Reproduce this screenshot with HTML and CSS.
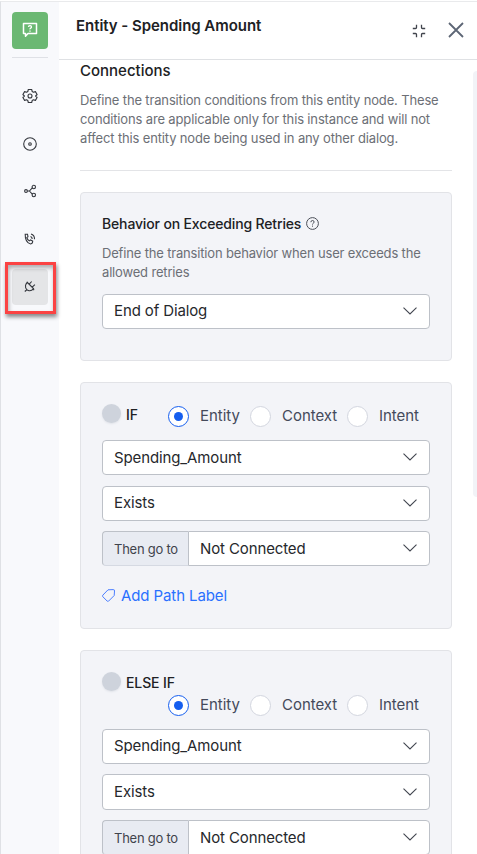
FILE: index.html
```html
<!DOCTYPE html>
<html lang="en">
<head>
<meta charset="utf-8">
<title>Entity - Spending Amount</title>
<link rel="stylesheet" href="styles.css">
</head>
<body>
<svg width="0" height="0" class="defs">
  <symbol id="chevron" viewBox="0 0 14 8"><path d="M.5 .7 7 7 13.500 .7" fill="none" stroke="currentColor" stroke-width="1.100"/></symbol>
</svg>
<div class="app">
  <nav class="rail">
    <div class="logo">
      <svg width="16" height="16" viewBox="0 0 16 16" fill="none" stroke="#fff" stroke-width="1.500"><path d="M1.500 1.500h13v10H6l-2.500 2.700v-2.700h-2z" stroke-linejoin="round"/><path d="M6.500 5q0-1.300 1.500-1.300T9.500 5q0 .7-.8 1.100T8 7.300M8 8.500v1.300" stroke-width="1.300"/></svg>
    </div>
    <div class="rule"></div>
    <a class="item"><svg width="16" height="16" viewBox="0 0 16 16"><path d="M6.300 1.500h3.400l.5 2 1.200.7 2-.6 1.700 2.900-1.500 1.500 1.500 1.500-1.700 2.900-2-.6-1.200.7-.5 2H6.300l-.5-2-1.200-.7-2 .6L.9 9.500 2.400 8 .9 6.500l1.700-2.900 2 .6 1.200-.7z" stroke-linejoin="round"/><circle cx="8" cy="8" r="2"/></svg></a>
    <a class="item"><svg width="16" height="16" viewBox="0 0 16 16"><circle cx="8" cy="8" r="6.300"/><circle cx="8" cy="8" r="1.300"/></svg></a>
    <a class="item"><svg width="16" height="16" viewBox="0 0 16 16"><circle cx="4" cy="8" r="1.400"/><circle cx="11.800" cy="4" r="1.700"/><circle cx="11.800" cy="12" r="1.700"/><path d="M5.400 8h2L10.300 4.800M7.400 8l2.900 3.200"/></svg></a>
    <a class="item"><svg width="16" height="16" viewBox="0 0 16 16"><path d="M3.200 3.200h2.300l.5 2.500-1.200 1q.8 2 2.500 3.200l1.200-1 2.200 1.200q0 2.600-2 2.900Q3 11.500 3.200 3.200zM8.500 5.500q1.700.5 1.700 2.500M9 3q3.700 1 3.500 5.300"/></svg></a>
    <a class="item active"><svg width="16" height="16" viewBox="0 0 16 16"><path d="M5.400 4.500 11.500 10.600Q9.500 13.200 7 12.700L5.200 12Q3 10 3.500 7.500 3.800 5.800 5.400 4.500zM5.100 11.500 2.800 13.500M7.200 6.200 9.700 3.500M10.200 9.200 12.900 6.700M4.700 3.800 6 5M10.800 11l1.400 1"/></svg></a>
    <div class="marker"></div>
  </nav>
  <main class="panel">
    <header class="head">
      <h1>Entity - Spending Amount</h1>
      <svg class="shrink" width="14" height="14" viewBox="0 0 14 14"><path d="M4.500 .8v2.700q0 1-1 1H.8M9.500 .8v2.700q0 1 1 1h2.700M4.500 13.200v-2.700q0-1-1-1H.8M9.500 13.200v-2.700q0-1 1-1h2.700"/></svg>
      <svg class="close" width="16" height="16" viewBox="0 0 16 16"><path d="M1 1 15 15M15 1 1 15"/></svg>
    </header>
    <div class="body">
      <div class="content">
        <section class="intro">
          <h2>Connections</h2>
          <p>Define the transition conditions from this entity node. These<br>conditions are applicable only for this instance and will not<br>affect this entity node being used in any other dialog.</p>
        </section>
        <section class="card retries">
          <h3>Behavior on Exceeding Retries
            <svg width="13" height="13" viewBox="0 0 13 13"><circle cx="6.500" cy="6.500" r="5.900"/><path d="M4.900 5.200q0-1.700 1.600-1.700T8.100 5q0 .9-.9 1.300-.7.400-.7 1.200M6.500 8.600v1.100"/></svg>
          </h3>
          <p>Define the transition behavior when user exceeds the<br>allowed retries</p>
          <div class="select"><span>End of Dialog</span><svg><use href="#chevron"/></svg></div>
        </section>
        <section class="card rule-if">
          <div class="condition"><i class="dot"></i><b>IF</b></div>
          <div class="radios">
            <label class="on"><i></i>Entity</label><label><i></i>Context</label><label><i></i>Intent</label>
          </div>
          <div class="fields">
            <div class="select"><span>Spending_Amount</span><svg><use href="#chevron"/></svg></div>
            <div class="select"><span>Exists</span><svg><use href="#chevron"/></svg></div>
            <div class="group"><div class="prefix">Then go to</div><div class="select"><span>Not Connected</span><svg><use href="#chevron"/></svg></div></div>
          </div>
          <a class="add"><svg width="13" height="13" viewBox="0 0 13 13"><path d="M6 .8 11.300 .6Q12.600.5 12.500 2L12.200 6.500 6.500 12.200Q5.800 12.700 5.100 12L.8 7.700Q.2 7 .8 6.200z"/></svg>Add Path Label</a>
        </section>
        <section class="card rule-else">
          <div class="condition"><i class="dot"></i><b>ELSE IF</b></div>
          <div class="radios">
            <label class="on"><i></i>Entity</label><label><i></i>Context</label><label><i></i>Intent</label>
          </div>
          <div class="fields">
            <div class="select first"><span>Spending_Amount</span><svg><use href="#chevron"/></svg></div>
            <div class="select"><span>Exists</span><svg><use href="#chevron"/></svg></div>
            <div class="group"><div class="prefix">Then go to</div><div class="select"><span>Not Connected</span><svg><use href="#chevron"/></svg></div></div>
          </div>
        </section>
      </div>
      <div class="scrollbar"></div>
    </div>
  </main>
</div>
</body>
</html>
```
FILE: styles.css
```css
* { box-sizing: border-box; margin: 0; padding: 0; }
html, body { height: 100%; overflow: hidden; }
body { font-family: Inter, sans-serif; color: #202124; background: #fff; padding-top: 1px; }
.defs { display: block; position: absolute; }
.app { display: flex; height: 853px; border-top: 1px solid #e9eaec; border-left: 1px solid #dfe1e5; overflow: hidden; }

.rail { position: relative; width: 58px; flex: none; background: #f8f9fc; display: flex; flex-direction: column; align-items: center; padding-top: 10px; }
.logo { width: 36px; height: 37px; background: #6bb873; border-radius: 4px; display: flex; align-items: center; justify-content: center; }
.logo svg { margin-top: -2px; }
.rule { width: 36px; height: 1px; background: #dfe1e6; margin: 8px 0 20px; }
.item { width: 36px; height: 36px; margin-bottom: 11.500px; border-radius: 4px; display: flex; align-items: center; justify-content: center; }
.item svg { fill: none; stroke: #34373d; stroke-width: 1.100; }
.active { background: #e4e5e7; margin-top: 1px; }
.active svg { margin-top: -2px; }
.marker { position: absolute; left: 4px; top: 260px; width: 51px; height: 52px; border: 3px solid #fb4343; box-shadow: 1px 3px 4px rgba(0,0,0,.45), inset 1px 3px 4px rgba(0,0,0,.3); }

.panel { flex: 1; min-width: 0; display: flex; flex-direction: column; }
.head { height: 58px; flex: none; display: flex; border-bottom: 1px solid #dfe1e4; padding-left: 17px; }
h1 { font-size: 15px; font-weight: 600; line-height: 20px; margin-top: 14px; width: 336px; letter-spacing: -.05px; }
.head svg { fill: none; stroke: #40444c; stroke-width: 1.300; flex: none; }
.head .shrink { margin: 22px 22px 0 0; }
.head .close { margin-top: 19.500px; stroke: #5d6675; stroke-width: 1.800; }
.body { flex: 1; min-height: 0; display: flex; justify-content: space-between; }
.content { width: 372px; margin-left: 21px; }
.scrollbar { width: 4px; height: 426px; margin-top: 11px; border-radius: 4px 0 0 4px; background: #f2f3f7; }

.intro { height: 111px; border-bottom: 1px solid #e3e4e7; padding-top: 1px; }
h2 { font-size: 15px; font-weight: 500; line-height: 20px; }
p { font-size: 13px; line-height: 19px; color: #6c6f76; letter-spacing: -.15px; }
.intro p { margin-top: 10px; }

.card { background: #f3f4f8; border: 1px solid #e2e3e7; border-radius: 4px; padding: 0 21px; margin-top: 21px; }
.retries { height: 169px; padding-top: 21px; }
h3 { font-size: 14px; font-weight: 450; line-height: 20px; display: flex; align-items: center; gap: 5px; letter-spacing: -.15px; }
h3 svg { fill: none; stroke: #4a4e57; margin-top: -2px; }
.retries p { margin: 10px 0 12px; letter-spacing: -.17px; }
.select { height: 35px; border: 1px solid #bdc1c8; border-radius: 4px; background: #fff; display: flex; align-items: center; justify-content: space-between; padding: 0 12px 0 11px; font-size: 15px; line-height: 20px; color: #26282c; letter-spacing: -.12px; }
.select svg { width: 14px; height: 8px; color: #424650; margin-top: -2px; }
.select span { margin-top: -2px; }
.fields .select span { margin-top: 0; }
.fields .select svg { margin-top: -1px; }
.fields .first span { margin-top: -2px; }
.fields .first svg { margin-top: -2px; }

.rule-if { height: 247px; display: grid; grid-template-columns: 66px 1fr; grid-template-rows: 57px 126px auto; }
.rule-else { display: grid; grid-template-rows: 42px 36px auto; height: 250px; }
.condition { display: flex; align-items: flex-start; gap: 5px; padding-top: 21px; }
.condition b { font-size: 14px; font-weight: 450; line-height: 20px; margin-top: 1px; white-space: nowrap; letter-spacing: -.1px; }
.dot { width: 19px; height: 19px; border-radius: 50%; background: #ced3dc; box-shadow: 0 1px 2px #dfe2e8; }
.radios { display: flex; align-items: flex-start; padding-top: 23px; font-size: 15px; line-height: 20px; color: #444a5b; letter-spacing: -.03px; }
.rule-else .radios { margin-left: 66px; padding-top: 2px; }
.radios label { display: flex; align-items: flex-start; white-space: nowrap; flex: none; }
.radios label:nth-child(1) { width: 82px; }
.radios label:nth-child(2) { width: 97px; }
.radios i { width: 21px; height: 21px; border-radius: 50%; background: #fff; border: 1px solid #d3d6df; margin-right: 11px; display: grid; place-items: center; }
.radios .on i { border-color: #155eef; }
.radios .on i::after { content: ""; width: 9px; height: 9px; border-radius: 50%; background: #155eef; }
.fields { grid-column: 1 / -1; display: grid; grid-template-rows: 35px 35px 35px; row-gap: 10.500px; }
.rule-else .fields { grid-template-rows: 35px 36px 35px; row-gap: 10px; }
.rule-else .select { height: 100%; }
.group { display: flex; }
.prefix { width: 86px; height: 35px; flex: none; background: #e8ebf2; border: 1px solid #bdc1c8; border-right: 0; border-bottom-color: #d5d9e2; border-radius: 4px 0 0 4px; font-size: 13px; line-height: 35px; padding-left: 11px; color: #3f434c; letter-spacing: -.25px; }
.group .select { flex: 1; border-radius: 0 4px 4px 0; }
.add { grid-column: 1 / -1; margin-top: 19px; display: flex; align-items: center; gap: 6px; height: 20px; font-size: 15px; color: #2970ff; letter-spacing: -.1px; }
.add svg { fill: none; stroke: #4a7dff; }
```
